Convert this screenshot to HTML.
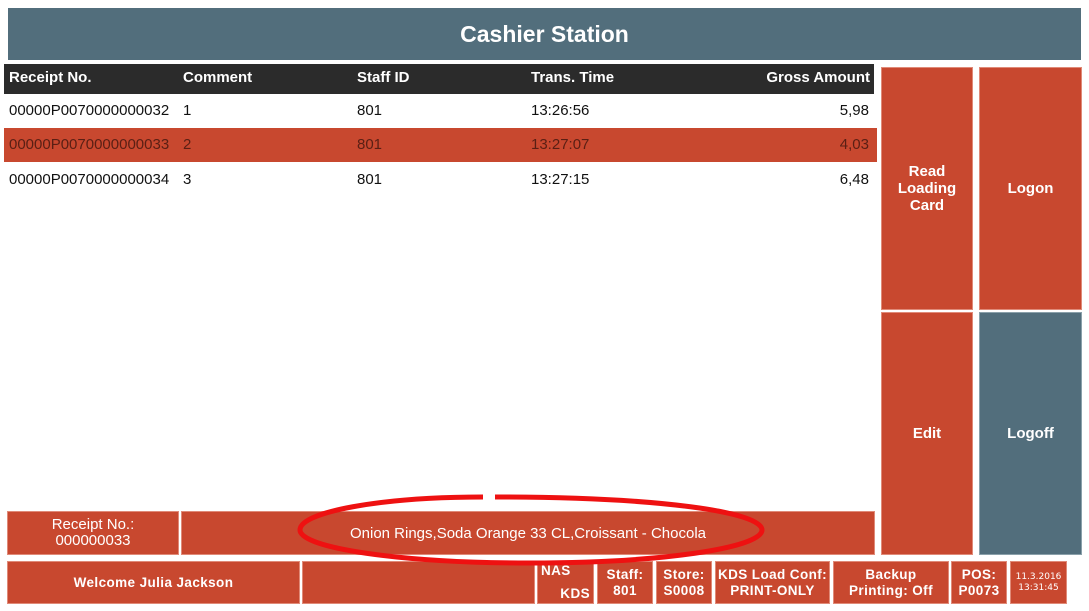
<!DOCTYPE html>
<html><head><style>
body{margin:0;width:1089px;height:611px;background:#fff;position:relative;font-family:"Liberation Sans",sans-serif;overflow:hidden}
.a{position:absolute;box-sizing:border-box}
.r{background:#c8482f;color:#fff;border:1px solid #e08a78;display:flex;align-items:center;justify-content:center;text-align:center}
.b{font-family:"Liberation Sans",sans-serif;font-weight:bold;font-size:13.5px;line-height:16px;letter-spacing:0.4px}
.t{position:absolute;font-size:15px;top:0;line-height:33px}
</style></head><body>
<div class="a" style="left:8px;top:8px;width:1073px;height:52px;background:#526e7c;color:#fff;font-size:23px;font-weight:bold;display:flex;align-items:center;justify-content:center">Cashier Station</div>
<div class="a" style="left:4px;top:64px;width:870px;height:30px;background:#2b2b2b;color:#fff;font-size:15px;font-weight:bold;line-height:28px">
<span style="position:absolute;left:5px">Receipt No.</span><span style="position:absolute;left:179px">Comment</span><span style="position:absolute;left:353px">Staff ID</span><span style="position:absolute;left:527px">Trans. Time</span><span style="position:absolute;right:4px">Gross Amount</span></div>
<div class="a" style="left:4px;top:94px;width:870px;height:33px;color:#111"><span class="t" style="left:5px">00000P0070000000032</span><span class="t" style="left:179px">1</span><span class="t" style="left:353px">801</span><span class="t" style="left:527px">13:26:56</span><span class="t" style="right:5px">5,98</span></div>
<div class="a" style="left:4px;top:128px;width:873px;height:34px;background:#c8482f;color:#5a1f14"><span class="t" style="left:5px">00000P0070000000033</span><span class="t" style="left:179px">2</span><span class="t" style="left:353px">801</span><span class="t" style="left:527px">13:27:07</span><span class="t" style="right:8px">4,03</span></div>
<div class="a" style="left:4px;top:163px;width:870px;height:33px;color:#111"><span class="t" style="left:5px">00000P0070000000034</span><span class="t" style="left:179px">3</span><span class="t" style="left:353px">801</span><span class="t" style="left:527px">13:27:15</span><span class="t" style="right:5px">6,48</span></div>
<div class="a r" style="left:881px;top:67px;width:92px;height:243px;font-size:15px;font-weight:bold;line-height:17px">Read<br>Loading<br>Card</div>
<div class="a r" style="left:979px;top:67px;width:103px;height:243px;font-size:15px;font-weight:bold">Logon</div>
<div class="a r" style="left:881px;top:312px;width:92px;height:243px;font-size:15px;font-weight:bold">Edit</div>
<div class="a r" style="left:979px;top:312px;width:103px;height:243px;font-size:15px;font-weight:bold;background:#526e7c;border-color:#8aa0aa">Logoff</div>
<div class="a r" style="left:7px;top:511px;width:172px;height:44px;font-size:15px;line-height:16px">Receipt No.:<br>000000033</div>
<div class="a r" style="left:181px;top:511px;width:694px;height:44px;font-size:15px">Onion Rings,Soda Orange 33 CL,Croissant - Chocola</div>
<div class="a r b" style="left:7px;top:561px;width:293px;height:43px">Welcome Julia Jackson</div>
<div class="a r" style="left:302px;top:561px;width:233px;height:43px"></div>
<div class="a r b" style="left:537px;top:561px;width:57px;height:43px;display:block;text-align:left"><div style="padding-left:3px;line-height:14px;margin-top:2px">NAS</div><div style="text-align:right;padding-right:3px;margin-top:8px">KDS</div></div>
<div class="a r b" style="left:597px;top:561px;width:56px;height:43px">Staff:<br>801</div>
<div class="a r b" style="left:656px;top:561px;width:56px;height:43px">Store:<br>S0008</div>
<div class="a r b" style="left:715px;top:561px;width:115px;height:43px;white-space:nowrap">KDS Load Conf:<br>PRINT-ONLY</div>
<div class="a r b" style="left:833px;top:561px;width:116px;height:43px;white-space:nowrap">Backup<br>Printing: Off</div>
<div class="a r b" style="left:951px;top:561px;width:56px;height:43px">POS:<br>P0073</div>
<div class="a r" style="left:1010px;top:561px;width:57px;height:43px;font-family:'DejaVu Sans',sans-serif;font-size:9px;line-height:11px">11.3.2016<br>13:31:45</div>
<svg class="a" style="left:0;top:0" width="1089" height="611"><path d="M483 497 C 380 497 300 512 300 530 C 300 548 400 563 530 563 C 660 563 762 548 762 530 C 762 512 660 497 495 497" fill="none" stroke="#ee1111" stroke-width="5"/></svg>
</body></html>
